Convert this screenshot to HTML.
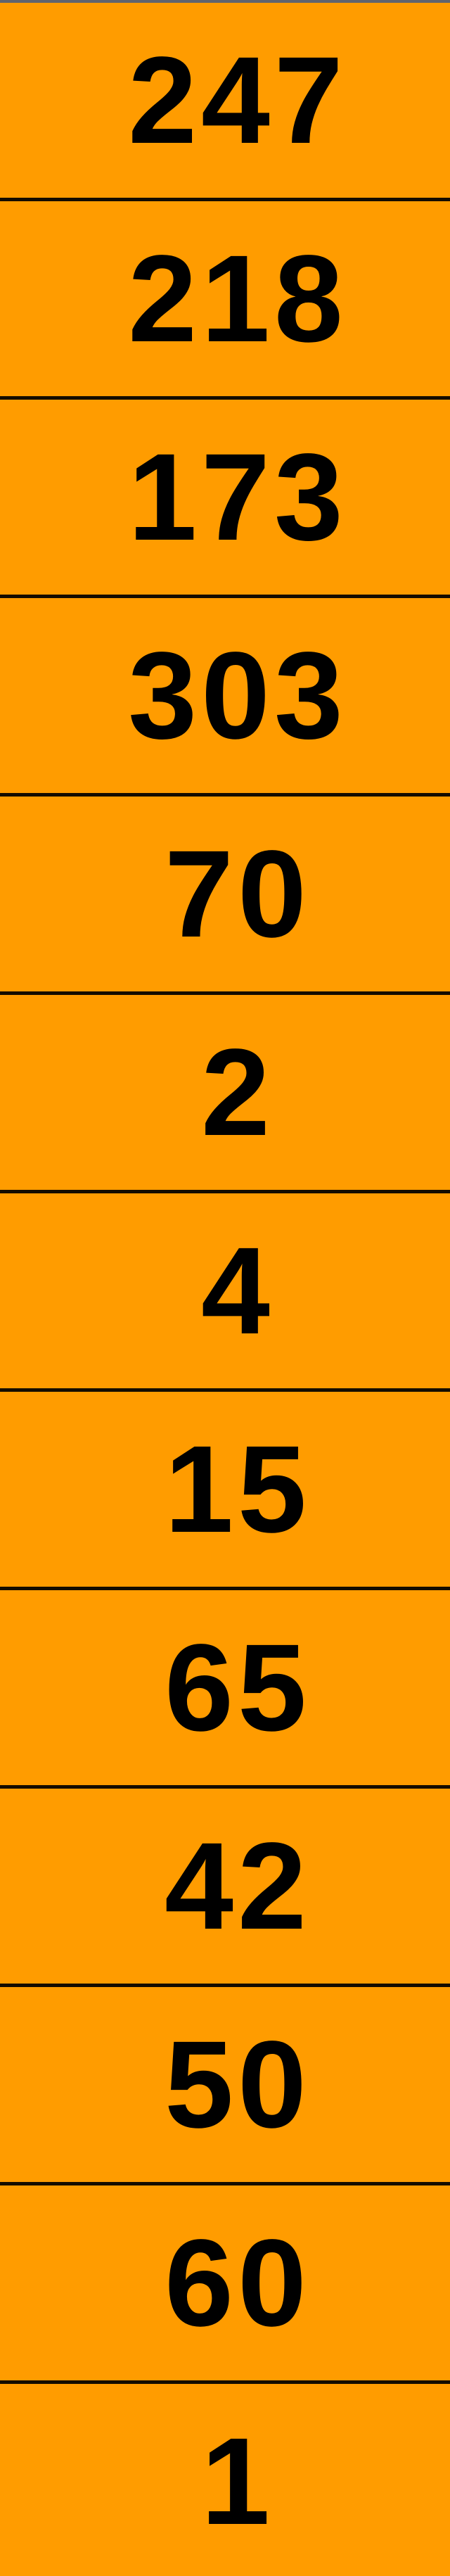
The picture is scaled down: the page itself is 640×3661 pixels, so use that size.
<!DOCTYPE html>
<html><head><style>
html,body{margin:0;padding:0;width:640px;height:3661px;overflow:hidden;background:#ff9c00;}
.top{height:4px;background:#5f6470;}
.r{height:277px;border-bottom:5px solid #140c00;background:#ff9c00;display:flex;align-items:center;justify-content:center;font-family:"Liberation Sans",sans-serif;font-weight:bold;font-size:176px;line-height:1;color:#000;}
.r span{position:relative;top:0px;left:18px;letter-spacing:6px;}
</style></head><body>
<div class="top"></div>
<div class="r"><span>247</span></div>
<div class="r"><span>218</span></div>
<div class="r"><span>173</span></div>
<div class="r"><span>303</span></div>
<div class="r"><span>70</span></div>
<div class="r"><span>2</span></div>
<div class="r"><span>4</span></div>
<div class="r"><span>15</span></div>
<div class="r"><span>65</span></div>
<div class="r"><span>42</span></div>
<div class="r"><span>50</span></div>
<div class="r"><span>60</span></div>
<div class="r" style="border-bottom:none"><span>1</span></div>
</body></html>
